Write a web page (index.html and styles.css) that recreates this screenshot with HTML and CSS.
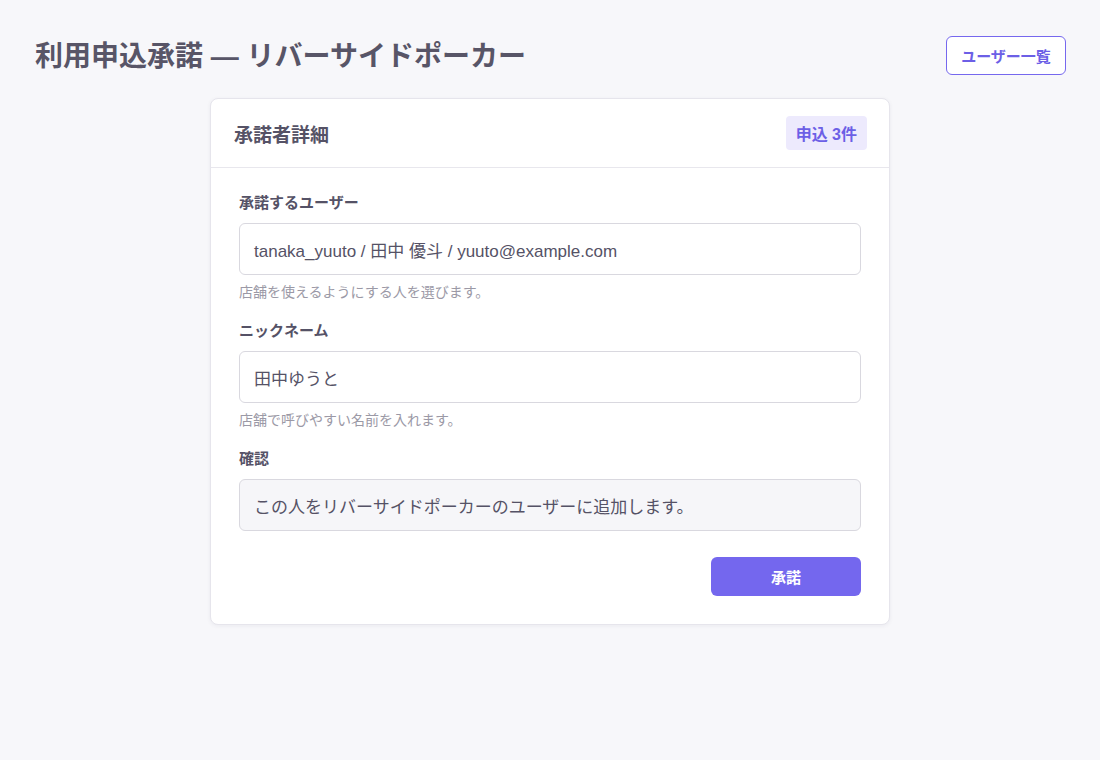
FILE: index.html
```html
<!DOCTYPE html>
<html lang="ja">
<head>
<meta charset="utf-8">
<title>利用申込承諾</title>
<link rel="stylesheet" href="styles.css">
</head>
<body>
<div class="page">
  <header class="topbar">
    <h1 class="page-title">利用申込承諾 — リバーサイドポーカー</h1>
    <a class="btn-outline" href="#">ユーザー一覧</a>
  </header>
  <section class="card">
    <div class="card-header">
      <h2 class="card-title">承諾者詳細</h2>
      <span class="badge">申込 3件</span>
    </div>
    <div class="card-body">
      <div class="field">
        <label class="field-label">承諾するユーザー</label>
        <div class="input">tanaka_yuuto / 田中 優斗 / yuuto@example.com</div>
        <p class="help">店舗を使えるようにする人を選びます。</p>
      </div>
      <div class="field">
        <label class="field-label">ニックネーム</label>
        <div class="input">田中ゆうと</div>
        <p class="help">店舗で呼びやすい名前を入れます。</p>
      </div>
      <div class="field">
        <label class="field-label">確認</label>
        <div class="input input-readonly">この人をリバーサイドポーカーのユーザーに追加します。</div>
      </div>
      <div class="actions">
        <button class="btn-primary" type="button">承諾</button>
      </div>
    </div>
  </section>
</div>
</body>
</html>
```
FILE: styles.css
```css
* { box-sizing: border-box; }
html, body { margin: 0; padding: 0; }
body {
  background: #f7f7fa;
  font-family: "Liberation Sans", "Noto Sans CJK JP", sans-serif;
  color: #555266;
}
.page {
  padding: 36px 34px 40px 34px;
}
.topbar {
  display: flex;
  justify-content: space-between;
  align-items: flex-start;
}
.page-title {
  margin: 0 0 0 1px;
  padding-top: 2px;
  font-size: 28px;
  line-height: 38px;
  font-weight: 700;
  color: #585567;
}
.btn-outline {
  display: inline-flex;
  align-items: center;
  justify-content: center;
  width: 120px;
  height: 39px;
  border: 1px solid #7668ee;
  border-radius: 6px;
  background: #fff;
  color: #6c5fe6;
  font-size: 15px;
  font-weight: 700;
  text-decoration: none;
}
.card {
  width: 680px;
  margin: 22px auto 0;
  background: #fff;
  border: 1px solid #e6e5ec;
  border-radius: 8px;
  box-shadow: 0 1px 4px rgba(40, 36, 70, 0.06);
}
.card-header {
  display: flex;
  justify-content: space-between;
  align-items: center;
  height: 69px;
  padding: 0 22px 0 23px;
  border-bottom: 1px solid #e8e7ed;
}
.card-title {
  margin: 0;
  font-size: 19px;
  font-weight: 700;
  color: #555266;
}
.badge {
  display: inline-flex;
  align-items: center;
  height: 34px;
  padding: 0 10px;
  background: #edeafd;
  color: #6c5fe6;
  border-radius: 4px;
  font-size: 16px;
  font-weight: 700;
}
.card-body {
  padding: 24px 28px 28px;
}
.field {
  margin-bottom: 19px;
}
.field-label {
  display: block;
  font-size: 15px;
  line-height: 22px;
  font-weight: 700;
  color: #555266;
  margin-bottom: 9px;
}
.input {
  display: flex;
  align-items: center;
  height: 52px;
  padding: 0 14px;
  border: 1px solid #d9d8df;
  border-radius: 6px;
  background: #fff;
  font-size: 17px;
  color: #555266;
}
.input-readonly {
  background: #f6f6f9;
}
.help {
  margin: 8px 0 0;
  font-size: 14px;
  line-height: 18px;
  color: #9b99a6;
}
.actions {
  display: flex;
  justify-content: flex-end;
  margin-top: 26px;
}
.btn-primary {
  width: 150px;
  height: 39px;
  border: none;
  border-radius: 6px;
  background: #7467ee;
  color: #fff;
  font-family: inherit;
  font-size: 15px;
  font-weight: 700;
}
```
